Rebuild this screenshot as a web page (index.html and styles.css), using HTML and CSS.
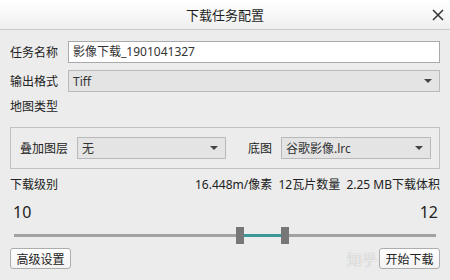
FILE: index.html
```html
<!DOCTYPE html>
<html>
  <head>
    <title>下载任务配置</title>
    <link rel="stylesheet" href="styles.css">
  </head>
  <body>
    <div class="dialog">
      <div class="title-bar">
        <span class="title">下载任务配置</span>
        <svg class="close" width="12" height="12" viewBox="0 0 12 12">
          <path d="M1 1 L11 11 M11 1 L1 11" stroke="#333" stroke-width="1.5" fill="none"/>
        </svg>
      </div>
      <div class="content">
        <div class="form-row">
          <label class="label">任务名称</label>
          <div class="text-input">影像下载_1901041327</div>
        </div>
        <div class="form-row">
          <label class="label">输出格式</label>
          <div class="combo wide">
            <span>Tiff</span>
            <span class="arrow"></span>
          </div>
        </div>
        <div class="section-title">地图类型</div>
        <div class="group-box">
          <label class="label-inner">叠加图层</label>
          <div class="combo overlay-combo">
            <span>无</span>
            <span class="arrow"></span>
          </div>
          <label class="label-base">底图</label>
          <div class="combo base-combo">
            <span>谷歌影像.lrc</span>
            <span class="arrow"></span>
          </div>
        </div>
        <div class="info-row">
          <span>下载级别</span>
          <span>16.448m/像素&nbsp; 12瓦片数量&nbsp; 2.25 MB下载体积</span>
        </div>
        <div class="level-row">
          <span>10</span>
          <span>12</span>
        </div>
        <div class="slider">
          <div class="track left"></div>
          <div class="handle"></div>
          <div class="track active"></div>
          <div class="handle"></div>
          <div class="track right"></div>
        </div>
        <div class="button-row">
          <button class="btn">高级设置</button>
          <span class="watermark">知乎</span>
          <button class="btn">开始下载</button>
        </div>
      </div>
    </div>
  </body>
</html>
```

FILE: styles.css
```css
body {
  margin: 0px;
  background-color: #ececec;
  font-family: "Noto Sans", "Noto Sans CJK SC", sans-serif;
  font-size: 12px;
  color: #222222;
}
.dialog {
  width: 450px;
  height: 280px;
  overflow: hidden;
}
.title-bar {
  height: 29px;
  border-bottom: 1px solid #c9c9c9;
  background: linear-gradient(#ffffff, #efefef);
  display: flex;
  align-items: center;
  justify-content: center;
  position: relative;
}
.title {
  font-size: 13px;
  color: #1e1e1e;
}
.close {
  position: absolute;
  right: 6px;
  top: 9px;
}
.content {
  padding: 11px 10px 0px 10px;
}
.form-row {
  display: flex;
  align-items: center;
  height: 22px;
  margin-bottom: 7px;
}
.label {
  width: 58px;
  flex: none;
}
.text-input {
  flex: 1;
  height: 20px;
  line-height: 20px;
  border: 1px solid #a9a9a9;
  background-color: #ffffff;
  padding-left: 4px;
  color: #333333;
}
.combo {
  height: 20px;
  border: 1px solid #b9b9b9;
  background-color: #e4e4e4;
  display: flex;
  align-items: center;
  justify-content: space-between;
  padding: 0px 7px 0px 4px;
  color: #333333;
}
.wide {
  flex: 1;
}
.arrow {
  width: 0px;
  height: 0px;
  border-left: 4px solid transparent;
  border-right: 4px solid transparent;
  border-top: 4px solid #444444;
}
.section-title {
  height: 20px;
  line-height: 20px;
  margin-top: -2px;
  margin-bottom: 10px;
}
.group-box {
  height: 40px;
  border: 1px solid #c2c2c2;
  display: flex;
  align-items: center;
  padding-left: 9px;
}
.label-inner {
  width: 57px;
}
.overlay-combo {
  width: 136px;
}
.label-base {
  margin-left: 22px;
  width: 33px;
}
.base-combo {
  width: 137px;
}
.info-row {
  display: flex;
  justify-content: space-between;
  height: 18px;
  line-height: 18px;
  margin-top: 7px;
}
.level-row {
  display: flex;
  justify-content: space-between;
  font-size: 16px;
  height: 20px;
  line-height: 20px;
  margin-top: 8px;
  padding: 0px 2px 0px 3px;
}
.slider {
  display: flex;
  align-items: center;
  height: 17px;
  margin-top: 5px;
  padding: 0px 4px;
}
.track {
  height: 3px;
  background-color: #a2a2a2;
}
.track.left {
  width: 222px;
}
.track.active {
  width: 37px;
  background-color: #3c9898;
}
.track.right {
  flex: 1;
}
.handle {
  width: 8px;
  height: 17px;
  background-color: #777777;
}
.button-row {
  display: flex;
  align-items: center;
  margin-top: 4px;
}
.btn {
  height: 21px;
  width: 61px;
  padding: 0px;
  font-family: "Noto Sans", "Noto Sans CJK SC", sans-serif;
  font-size: 12px;
  color: #222222;
  border: 1px solid #adadad;
  border-radius: 3px;
  background: linear-gradient(#ffffff, #f3f3f3);
}
.watermark {
  margin-left: auto;
  margin-right: 2px;
  font-size: 15px;
  color: rgba(255, 255, 255, 0.8);
  text-shadow: 0px 0px 1px #9a9a9a;
}
```
